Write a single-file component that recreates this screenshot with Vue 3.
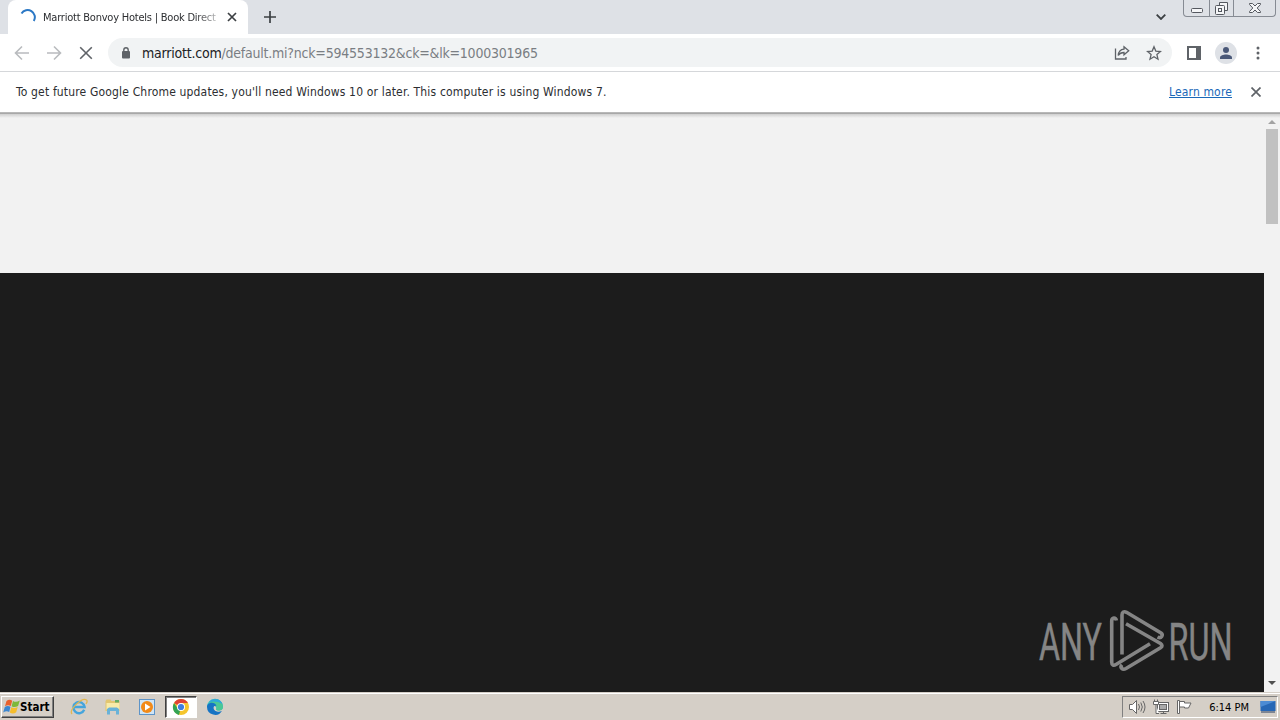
<template>
  <div class="desktop">
    <header class="tab-strip">
      <div class="tab">
        <svg class="spinner" width="16" height="16" viewBox="0 0 16 16">
          <path d="M1.5 4.5A7 7 0 0 1 13.8 12" />
        </svg>
        <span class="tab-title">Marriott Bonvoy Hotels | Book Direct</span>
        <button class="icon-btn tab-close" type="button">
          <svg width="10" height="10" viewBox="0 0 10 10"><path d="M1 1l8 8M9 1L1 9" /></svg>
        </button>
      </div>
      <button class="icon-btn new-tab" type="button">
        <svg width="12" height="12" viewBox="0 0 12 12"><path d="M6 0v12M0 6h12" /></svg>
      </button>
      <svg class="tab-search" width="10" height="6" viewBox="0 0 10 6"><path d="M.7 .7L5 5 9.3 .7" /></svg>
      <div class="win-buttons">
        <span class="win-btn win-min">
          <svg width="12" height="5" viewBox="0 0 12 5"><rect x=".5" y=".5" width="11" height="4" rx="1" /></svg>
        </span>
        <span class="win-btn win-max">
          <svg width="13" height="13" viewBox="0 0 13 13">
            <path d="M4.5 3V.5h8v8H10" />
            <rect x=".5" y="3.5" width="9" height="9" rx="1" />
            <rect x="3.5" y="6.5" width="3" height="3" />
          </svg>
        </span>
        <span class="win-btn win-close">
          <svg width="12" height="10" viewBox="0 0 12 10">
            <path d="M.5 .5h3L6 3 8.5 .5h3v1L8.2 5l3.3 3.5v1h-3L6 7 3.5 9.5h-3v-1L3.8 5 .5 1.5z" />
          </svg>
        </span>
      </div>
    </header>

    <nav class="toolbar">
      <svg class="nav-icon disabled" width="16" height="16" viewBox="0 0 16 16"><path d="M15 8H2M8 1.5L1.5 8 8 14.5" /></svg>
      <svg class="nav-icon disabled" width="16" height="16" viewBox="0 0 16 16"><path d="M1 8h13M8 1.5L14.5 8 8 14.5" /></svg>
      <svg class="nav-icon" width="16" height="16" viewBox="0 0 16 16"><path d="M2.2 2.2l11.600 11.600M13.800 2.2L2.2 13.800" /></svg>
      <div class="omnibox">
        <svg class="lock" width="8" height="12" viewBox="0 0 8 12">
          <rect y="4" width="8" height="7.5" rx="1" />
          <path d="M1.8 5V3a2.2 2.2 0 0 1 4.400 0v2" />
        </svg>
        <span class="url"><b>marriott.com</b>/default.mi?nck=594553132&amp;ck=&amp;lk=1000301965</span>
        <svg class="share" width="16" height="16" viewBox="0 0 16 16">
          <path d="M1.5 3.500v10.500h10.500V12M10 1.800l4.700 4L10 9.800V7.500C7 7.500 5.500 8.400 4.200 10.500 4.500 7 6.500 4.500 10 4.200z" />
        </svg>
        <svg class="star" width="16" height="16" viewBox="0 0 16 16">
          <path d="M8 1.800l1.800 4.300 4.700 .4-3.600 3.100 1.100 4.600L8 11.800l-4 2.400 1.100-4.600L1.500 6.500l4.700-.4z" />
        </svg>
      </div>
      <svg class="side-panel" width="14" height="14" viewBox="0 0 14 14">
        <rect x="1" y="1" width="12" height="12" />
        <path d="M9 1h4v12H9z" />
      </svg>
      <span class="avatar">
        <svg width="12" height="12" viewBox="0 0 12 12">
          <circle cx="6" cy="3" r="3" />
          <path d="M0 12v-1.500C0 8.500 3.500 7.500 6 7.500s6 1 6 3V12z" />
        </svg>
      </span>
      <svg class="menu" width="4" height="14" viewBox="0 0 4 14">
        <circle cx="2" cy="2" r="1.500" /><circle cx="2" cy="7" r="1.500" /><circle cx="2" cy="12" r="1.500" />
      </svg>
    </nav>

    <section class="infobar">
      <span class="info-text">To get future Google Chrome updates, you'll need Windows 10 or later. This computer is using Windows 7.</span>
      <a class="learn-more">Learn more</a>
      <button class="icon-btn info-close" type="button">
        <svg width="10" height="10" viewBox="0 0 10 10"><path d="M.5 .5l9 9M9.5 .5l-9 9" /></svg>
      </button>
    </section>

    <main class="viewport">
      <div class="page">
        <div class="page-light"></div>
        <div class="page-dark"></div>
      </div>
      <div class="scrollbar">
        <svg class="arrow-up" width="8" height="4" viewBox="0 0 8 4"><path d="M0 4l4-4 4 4z" /></svg>
        <div class="thumb"></div>
        <svg class="arrow-down" width="8" height="4" viewBox="0 0 8 4"><path d="M0 0l4 4 4-4z" /></svg>
      </div>
      <svg class="watermark" width="204" height="64" viewBox="0 0 204 64">
        <text x="2" y="50.500" textLength="63" lengthAdjust="spacingAndGlyphs">ANY</text>
        <text x="131.500" y="50.500" textLength="64" lengthAdjust="spacingAndGlyphs">RUN</text>
        <g>
          <path d="M79.300 11.500C79 8 74.700 8.500 74.700 12V53C74.700 56 76.500 57 79 55.500L113 34.800" />
          <path d="M85 45.500V6C85 3 87 2 89.500 3.300L124 24C126.500 26 124.500 30 120.500 28" />
          <path d="M89 14.700L123.500 34.500Q126.500 36.700 123.500 38.700L89 59.500C85.500 61.500 82.500 58.500 85 55.800" />
        </g>
      </svg>
    </main>

    <footer class="taskbar">
      <button class="start" type="button">
        <svg width="17" height="16" viewBox="0 0 17 16">
          <path fill="#e8602c" d="M3.500 2C5.500 .4 7.500 .6 9.200 1.700L7.800 7C6 6 4 6 2 7.200z" />
          <path fill="#7db83a" d="M10 2c2 1.200 4.200 1.200 6.800-.5l-1.700 5.500C12.500 8.500 10.500 8.300 8.600 7.200z" />
          <path fill="#3b86d0" d="M1.800 8c2-1.200 3.900-1.100 5.700-.2L6.200 13C4.500 12 2.500 12 .2 13.400z" />
          <path fill="#f5bd2c" d="M8.300 8.200c2 1 4 1 6.400-.2L13.200 13.300c-2 1.500-4.300 1.500-6.400 .3z" />
        </svg>
        Start
      </button>
      <div class="quick-launch">
        <span class="launcher">
          <svg width="18" height="18" viewBox="0 0 18 18">
            <path d="M14.200 11.800A5.600 5.600 0 1 1 14.600 9H4.500" fill="none" stroke="#45a5dc" stroke-width="2.400" />
            <path d="M2 16C-1.500 12 12-1 16.500 2c1 .8 .5 2.500-.5 4" fill="none" stroke="#e3b850" stroke-width="1.300" />
          </svg>
        </span>
        <span class="launcher">
          <svg width="18" height="18" viewBox="0 0 18 18">
            <path d="M1.500 3l1-1.500h4l1 1.500h8V13h-14z" fill="#e2c671" />
            <path d="M2.500 5h13v6.500h-13z" fill="#f8eba9" />
            <path d="M11 2h4v2.500h-4z" fill="#65ad64" />
            <path d="M3 16.500V11l2-1.500h8l2 1.500v5.500h-3V13H6v3.500z" fill="#69b2d8" />
          </svg>
        </span>
        <span class="launcher">
          <svg width="18" height="18" viewBox="0 0 18 18">
            <rect x="1.500" y="1.500" width="15" height="15" fill="#cfe5f6" stroke="#5d94c8" />
            <circle cx="9" cy="9" r="6" fill="#f28a18" />
            <path d="M7 5.500v7L12.500 9z" fill="#fff" />
          </svg>
        </span>
        <span class="launcher active">
          <svg width="18" height="18" viewBox="0 0 18 18">
            <circle cx="9" cy="9" r="8" fill="#f5c52d" />
            <path d="M9 9L2.070 5A8 8 0 0 1 15.930 5H9z" fill="#df4335" />
            <path d="M9 9l-2 8A8 8 0 0 1 2.070 5L6 11z" fill="#33a354" />
            <circle cx="9" cy="9" r="4" fill="#fff" />
            <circle cx="9" cy="9" r="3.100" fill="#3f7ee0" />
          </svg>
        </span>
        <span class="launcher">
          <svg width="18" height="18" viewBox="0 0 18 18">
            <path d="M1 9a8 8 0 0 1 16-.5c0 3-2 4-4.500 4-2 0-3-.8-2-2.500C9 7 5 7 1 9z" fill="#35bfc4" />
            <path d="M8 1.100A8 8 0 0 1 17 8.500c0 3-2 4-4 4-2 0-3.500-.5-2.500-2.500C10 6 7 4 3 5z" fill="#4bc795" />
            <path d="M3 4A8 8 0 0 1 9 1c4 0 6.500 2 7.500 5C12 3 7 3 3 4z" fill="#2fa7dc" />
            <path d="M1 9c0-5 8-6 9.500-1C7 7 6 12 11 13.500c2 .5 3.500 0 5-.8A8 8 0 0 1 1 9z" fill="#1674c4" />
          </svg>
        </span>
      </div>
      <div class="tray">
        <svg class="tray-sound" width="18" height="16" viewBox="0 0 18 16">
          <path d="M1.500 5.500h3l4-4v13l-4-4h-3z" fill="#fff" />
          <path d="M10.500 5q2 3 0 6M12.800 3.500q3 4.500 0 9M15 2q4 6 0 12" fill="none" />
        </svg>
        <svg class="tray-net" width="16" height="16" viewBox="0 0 16 16">
          <rect x="4.500" y="3.500" width="11" height="9" fill="#fff" />
          <rect x="6.500" y="5.500" width="7" height="5" fill="#aaa" />
          <path d="M7.500 14.500h6M10.500 13v2M1.500 .5v2M4.500 .5v2M.5 2.500h5v3h-5zM3 6v8.500h3" fill="#fff" />
        </svg>
        <svg class="tray-flag" width="17" height="16" viewBox="0 0 17 16">
          <path d="M1.500 1.500h2v13h-2zM3.500 2.500h5v1.500h6.500l-2.500 5h-4v-1h-5z" fill="#fff" />
        </svg>
        <span class="clock">6:14 PM</span>
        <svg class="show-desktop" width="16" height="14" viewBox="0 0 16 14">
          <path d="M.5 1h15v10H.5z" fill="#2767b5" />
          <path d="M.5 1h15L.5 7z" fill="#4c8bd4" />
          <path d="M1 12h14" stroke="#263d60" />
        </svg>
      </div>
    </footer>
  </div>
</template>

<script setup>
</script>

<style>
body {
  margin: 0;
  overflow: hidden;
}
</style>

<style scoped>
.desktop {
  width: 1280px;
  height: 720px;
  display: flex;
  flex-direction: column;
  overflow: hidden;
  font-family: "DejaVu Sans Condensed", "Noto Sans", sans-serif;
  font-size: 12px;
  color: #2c2e31;
}
.desktop svg {
  display: block;
  flex: none;
}
.icon-btn {
  display: flex;
  padding: 0;
  border: 0;
  background: transparent;
}
.icon-btn path {
  stroke: #3c4043;
  stroke-width: 1.7;
  fill: none;
}

/* tab strip */
.tab-strip {
  height: 34px;
  flex: none;
  display: flex;
  align-items: flex-start;
  padding-left: 8px;
  background: #dee1e6;
}
.tab {
  width: 240px;
  height: 34px;
  box-sizing: border-box;
  display: flex;
  align-items: center;
  padding: 0 11px 0 12px;
  border-radius: 8px 8px 0 0;
  background: #fff;
}
.spinner path {
  fill: none;
  stroke: #2b78c5;
  stroke-width: 2;
}
.tab-title {
  width: 178px;
  margin-left: 7px;
  white-space: nowrap;
  font-size: 11px;
  letter-spacing: -0.22px;
  mask-image: linear-gradient(to right, #000 152px, transparent 184px);
}
.tab-close {
  margin-left: auto;
}
.new-tab {
  margin: 11px 0 0 16px;
}
.tab-search {
  margin: 14px 17px 0 auto;
  fill: none;
  stroke: #3c4043;
  stroke-width: 1.8;
}
.win-buttons {
  display: flex;
  height: 16px;
  margin-right: 4px;
  border: 1px solid #868b93;
  border-top: 0;
  border-radius: 0 0 4px 4px;
}
.win-btn {
  display: flex;
  justify-content: center;
  box-sizing: border-box;
  width: 25px;
}
.win-btn svg {
  fill: #f4f5f7;
  stroke: #54585f;
}
.win-min svg {
  margin-top: 8px;
}
.win-max {
  border-left: 1px solid #868b93;
  border-right: 1px solid #868b93;
}
.win-max svg {
  margin-top: 2px;
}
.win-close {
  width: 41px;
}
.win-close svg {
  margin-top: 3px;
}

/* toolbar */
.toolbar {
  height: 37px;
  flex: none;
  display: flex;
  align-items: center;
  padding-left: 14px;
  border-bottom: 1px solid #d5d7da;
  background: #fff;
}
.nav-icon {
  margin-right: 16px;
  fill: none;
  stroke: #5f6368;
  stroke-width: 1.6;
}
.nav-icon.disabled {
  stroke: #b9bbbe;
}
.omnibox {
  width: 1064px;
  height: 29px;
  margin-left: -2px;
  box-sizing: border-box;
  display: flex;
  align-items: center;
  padding: 0 10px 0 14px;
  border-radius: 15px;
  background: #f1f3f4;
}
.lock {
  fill: #5f6368;
}
.lock path {
  fill: none;
  stroke: #5f6368;
  stroke-width: 1.4;
}
.url {
  margin-left: 12px;
  font-size: 14px;
  letter-spacing: -0.22px;
  color: #7a7e83;
}
.url b {
  font-weight: 400;
  color: #202124;
}
.share {
  margin-left: auto;
}
.star {
  margin-left: 16px;
}
.share,
.star {
  fill: none;
  stroke: #5f6368;
  stroke-width: 1.3;
}
.side-panel {
  margin-left: 15px;
  fill: none;
  stroke: #5f6368;
  stroke-width: 2;
}
.side-panel path {
  fill: #5f6368;
  stroke: none;
}
.avatar {
  width: 22px;
  height: 22px;
  margin-left: 14px;
  display: flex;
  align-items: center;
  justify-content: center;
  border-radius: 50%;
  background: #dee1e6;
  fill: #4a5878;
}
.menu {
  margin-left: 19px;
  fill: #5f6368;
}

/* infobar */
.infobar {
  height: 40px;
  flex: none;
  display: flex;
  align-items: center;
  padding: 0 19px 0 16px;
  background: #fff;
}
.info-text {
  letter-spacing: 0.165px;
}
.learn-more {
  margin-left: auto;
  letter-spacing: 0.15px;
  color: #1a68b8;
  text-decoration: underline;
}
.info-close {
  margin-left: 19px;
}
.info-close path {
  stroke: #5f6368;
}

/* page */
.viewport {
  position: relative;
  flex: 1;
  min-height: 0;
  display: flex;
  border-top: 1px solid #b8b8b8;
  background: linear-gradient(#a8a8a8 1px, #cfcfcf 1px, #f2f2f2 5px);
}
.page {
  width: 1264px;
  display: flex;
  flex-direction: column;
}
.page-light {
  height: 160px;
}
.page-dark {
  flex: 1;
  background: #1c1c1c;
}
.scrollbar {
  width: 16px;
  display: flex;
  flex-direction: column;
  align-items: center;
  padding: 7px 0;
  box-sizing: border-box;
}
.arrow-up {
  fill: #a3a3a3;
}
.thumb {
  width: 12px;
  height: 95px;
  margin-top: 5px;
  background: #c1c1c1;
}
.arrow-down {
  margin-top: auto;
  fill: #505050;
}
.watermark {
  position: absolute;
  right: 39px;
  bottom: 19px;
  font-family: Roboto, sans-serif;
  font-size: 52px;
  fill: #858585;
}
.watermark text {
  stroke: #858585;
  stroke-width: 0.5;
}
.watermark g {
  fill: none;
  stroke: #858585;
  stroke-width: 3.6;
}

/* taskbar */
.taskbar {
  height: 28px;
  flex: none;
  box-sizing: border-box;
  display: flex;
  align-items: center;
  padding: 1px 2px 0 1px;
  border-top: 1px solid #d5cfc7;
  background: #d5cfc7;
  box-shadow: inset 0 1px 0 #fff;
}
.start {
  width: 53px;
  height: 22px;
  box-sizing: border-box;
  display: flex;
  align-items: center;
  padding: 0 0 0 1px;
  border: 1px solid;
  border-color: #fff #404040 #404040 #fff;
  background: #d5cfc7;
  box-shadow: inset -1px -1px 0 #808080;
  font-family: inherit;
  font-size: 11.5px;
  font-weight: 700;
  color: #000;
}
.quick-launch {
  display: flex;
  gap: 2px;
  margin-left: 9px;
}
.launcher {
  width: 32px;
  height: 22px;
  box-sizing: border-box;
  display: flex;
  align-items: center;
  justify-content: center;
  border: 1px solid transparent;
}
.launcher.active {
  border-color: #404040 #fff #fff #404040;
  background: #fff;
  box-shadow: inset 1px 1px 0 #808080;
}
.tray {
  width: 156px;
  height: 22px;
  box-sizing: border-box;
  display: flex;
  align-items: center;
  margin-left: auto;
  padding-left: 5px;
  border: 1px solid;
  border-color: #808080 #fff #fff #808080;
}
.tray svg {
  stroke: #666;
}
.tray-net {
  margin-left: 7px;
}
.tray-flag {
  margin-left: 7px;
}
.clock {
  margin-left: auto;
  font-size: 11px;
  color: #000;
}
.tray .show-desktop {
  margin: 0 1px 0 11px;
  stroke: none;
}
</style>
